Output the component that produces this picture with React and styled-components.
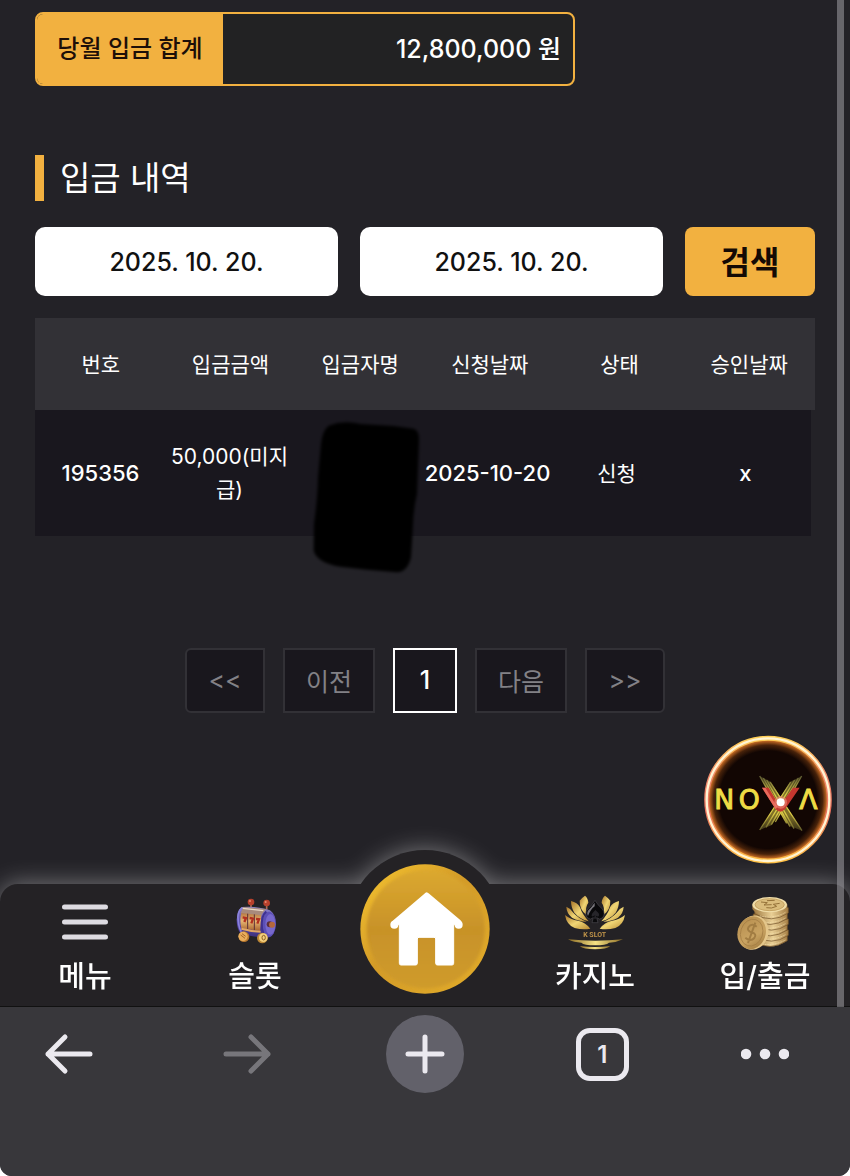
import React, { useState } from "react";
import styled, { createGlobalStyle } from "styled-components";

const gold = "#f2b140";
const pageBg = "#232227";
const barBg = "#242225";

const GlobalStyle = createGlobalStyle`
  * {
    box-sizing: border-box;
  }

  body {
    margin: 0;
    background-color: #fff;
    font-family: Inter, "Noto Sans CJK KR", sans-serif;
    font-weight: 500;
    color: #fff;
  }

  button,
  input {
    font-family: inherit;
    font-weight: inherit;
  }

  a {
    color: inherit;
    text-decoration: none;
  }
`;

const Screen = styled.div`
  position: relative;
  min-height: 100vh;
  display: flex;
  flex-direction: column;
  background-color: ${pageBg};
  border-radius: 0 0 12px 12px;
  overflow: hidden;
`;

const Viewport = styled.div`
  position: relative;
  flex: 1;
  display: flex;
  flex-direction: column;
`;

const ScrollBar = styled.div`
  position: absolute;
  top: 0;
  bottom: 0;
  right: 6px;
  width: 7px;
  background-color: rgba(160, 158, 164, 0.55);
`;

const Content = styled.main`
  flex: 1;
  padding: 12px 35px 0;
`;

const Summary = styled.div`
  display: flex;
  width: 540px;
  max-width: 100%;
  height: 74px;
  border: 2px solid ${gold};
  border-radius: 8px;
  background-color: #222223;
  line-height: 70px;
  overflow: hidden;
`;

const SummaryLabel = styled.div`
  width: 186px;
  background-color: ${gold};
  color: #1d0f08;
  font-size: 24px;
  text-align: center;
`;

const SummaryValue = styled.div`
  flex: 1;
  padding: 0 12px;
  font-size: 25px;
  text-align: right;
`;

const Title = styled.h2`
  margin: 69px 0 26px;
  padding-left: 16px;
  border-left: 9px solid ${gold};
  font-size: 33px;
  line-height: 46px;
  font-weight: 400;
`;

const SearchForm = styled.form`
  display: flex;
  gap: 22px;
`;

const DateInput = styled.input`
  flex: 1;
  min-width: 0;
  height: 69px;
  border: 0;
  border-radius: 10px;
  background-color: #fff;
  color: #111;
  font-size: 25px;
  text-align: center;
`;

const SearchButton = styled.button`
  width: 130px;
  height: 69px;
  padding: 0 0 4px;
  border: 0;
  border-radius: 8px;
  background-color: ${gold};
  color: #140a04;
  font-size: 32px;
  font-weight: 700;
  cursor: pointer;
`;

const Table = styled.table`
  display: block;
  margin-top: 22px;
  font-size: 21px;
  line-height: 33px;
  font-weight: 400;
  text-align: center;
`;

const Head = styled.thead`
  display: block;
`;

const Body = styled.tbody`
  display: block;
  padding-right: 4px;
`;

const Row = styled.tr`
  display: table;
  table-layout: fixed;
  width: 100%;
  height: ${(props) => (props.$head ? "92px" : "126px")};
  background-color: ${(props) => (props.$head ? "#323136" : "#19171e")};
`;

const HeadCell = styled.th`
  padding: 0;
  font-weight: 400;
`;

const Cell = styled.td`
  position: relative;
  padding: 0;
  font-size: ${(props) => (props.$number ? "22px" : "21px")};
  font-weight: ${(props) => (props.$number ? 500 : 400)};
  white-space: ${(props) => (props.$number ? "nowrap" : "normal")};
  word-break: break-all;
`;

const Redaction = styled.svg`
  position: absolute;
  top: 2px;
  left: 11px;
  width: 120px;
  height: 165px;
`;

const Pagination = styled.nav`
  display: flex;
  justify-content: center;
  gap: 18px;
  margin-top: 112px;
`;

const PageButton = styled.button`
  width: ${(props) => props.$width};
  height: 65px;
  padding: 0 0 2px;
  border: 2px solid ${(props) => (props.$active ? "#fff" : "#323136")};
  border-radius: ${(props) => props.$radius || "0"};
  background-color: #19171d;
  color: ${(props) => (props.$active ? "#fff" : "#828186")};
  font-size: 25px;
  font-weight: ${(props) => (props.$active ? 500 : 400)};
  cursor: pointer;
`;

const Dock = styled.div`
  position: relative;
  filter: drop-shadow(0 0 12px rgba(255, 255, 255, 0.4));
`;

const DockBump = styled.div`
  position: absolute;
  top: -34px;
  left: 50%;
  width: 156px;
  height: 156px;
  border-radius: 50%;
  background-color: ${barBg};
  transform: translateX(-50%);
`;

const DockList = styled.nav`
  position: relative;
  display: grid;
  grid-template-columns: repeat(5, 1fr);
  height: 123px;
  border-bottom: 1px solid #111;
  border-radius: 18px 18px 0 0;
  background-color: ${barBg};
`;

const DockItem = styled.a`
  display: flex;
  flex-direction: column;
  align-items: center;
  padding-top: 9px;
  font-size: 29px;
  line-height: 48px;

  svg {
    display: block;
    width: 60px;
    height: 60px;
  }
`;

const HomeLink = styled.a`
  position: relative;
  top: -20px;
  justify-self: center;
  width: 130px;
  height: 130px;

  svg {
    display: block;
    width: 100%;
    height: 100%;
  }
`;

const NovaBadge = styled.a`
  position: absolute;
  right: 17px;
  bottom: 142px;
  width: 130px;
  height: 130px;

  svg {
    display: block;
    width: 100%;
    height: 100%;
  }
`;

const BrowserBar = styled.div`
  position: relative;
  display: flex;
  justify-content: space-between;
  height: 169px;
  padding: 8px 61px 0 30px;
  background-color: #38373b;
`;

const BrowserButton = styled.button`
  display: flex;
  align-items: center;
  justify-content: center;
  width: ${(props) => props.$width || "78px"};
  height: 78px;
  padding: 0;
  border: 0;
  border-radius: 50%;
  background-color: ${(props) => (props.$filled ? "#62616a" : "transparent")};
  color: ${(props) => (props.$dim ? "#77767b" : "#ebe9ef")};
  cursor: pointer;
`;

const TabCount = styled.span`
  display: flex;
  align-items: center;
  justify-content: center;
  width: 53px;
  height: 53px;
  border: 5px solid currentColor;
  border-radius: 14px;
  font-size: 24px;
  font-weight: 600;
`;

const MenuIcon = () => (
  <svg viewBox="0 0 60 60" stroke="#dddbe1" strokeWidth="5" strokeLinecap="round">
    <path d="M9.500 14H50.500M9.500 29H50.500M9.500 44H50.500" />
  </svg>
);

const SlotIcon = () => (
  <svg viewBox="15 24 180 180">
    <defs>
      <linearGradient id="barrel" x1="0" y1="0" x2="0" y2="1">
        <stop offset="0" stopColor="#8f86c8" />
        <stop offset="0.500" stopColor="#5a4cae" />
        <stop offset="1" stopColor="#3c2f7a" />
      </linearGradient>
      <linearGradient id="reel" x1="0" y1="0" x2="0" y2="1">
        <stop offset="0" stopColor="#b87a42" />
        <stop offset="0.450" stopColor="#e6b673" />
        <stop offset="1" stopColor="#a8622d" />
      </linearGradient>
    </defs>
    <path d="M93 54V72M140 56V74" stroke="#b06a55" strokeWidth="5" />
    <circle cx="93" cy="51" r="10" fill="#b8402c" />
    <circle cx="140" cy="54" r="10" fill="#b8402c" />
    <circle cx="90" cy="48" r="3" fill="#e58a70" />
    <circle cx="137" cy="51" r="3" fill="#e58a70" />
    <path
      d="M66 66Q110 62 150 76Q168 90 168 116Q166 150 146 158Q100 156 62 146Q50 130 50 104Q52 76 66 66Z"
      fill="url(#barrel)"
    />
    <path d="M70 66L138 72Q126 84 122 96L62 84Z" fill="#a88a7c" />
    <path d="M68 70L130 77" stroke="#e9d9c8" strokeWidth="4" />
    <path d="M64 84L124 91L120 138L64 130Q58 106 64 84Z" fill="url(#reel)" />
    <path d="M83 86V132M103 88V136" stroke="#5b3038" strokeWidth="3" />
    <path
      d="M68 97L78 99L73 111M89 99L99 101L94 115M108 102L117 103L112 116"
      fill="none"
      stroke="#b2301f"
      strokeWidth="7"
    />
    <path d="M64 131Q92 139 122 140" fill="none" stroke="#e2a765" strokeWidth="6" />
    <path d="M66 68Q50 82 55 108Q57 130 64 140" fill="none" stroke="#8b83dc" strokeWidth="5" />
    <ellipse cx="147" cy="118" rx="20" ry="38" fill="#5c4fb6" />
    <ellipse cx="151" cy="118" rx="15" ry="31" fill="#7768cc" />
    <path d="M139 80Q122 92 126 130Q128 146 136 156" fill="none" stroke="#3e318f" strokeWidth="6" />
    <circle cx="149" cy="118" r="9" fill="#5b2e3c" />
    <circle cx="156" cy="119" r="9" fill="#b5683c" />
    <circle cx="72" cy="155" r="16" fill="#b9782e" />
    <circle cx="69" cy="154" r="14" fill="#e9ae5c" />
    <path d="M62 150L75 160M66 146L77 154" stroke="#a86728" strokeWidth="3" />
    <circle cx="127" cy="159" r="16" fill="#bc8736" />
    <circle cx="130" cy="158" r="13" fill="#f3cf7d" />
    <ellipse cx="131" cy="158" rx="5" ry="7" fill="none" stroke="#8d6123" strokeWidth="3" />
  </svg>
);

const CasinoIcon = () => (
  <svg viewBox="75 69 180 180">
    <defs>
      <linearGradient id="petal" x1="0" y1="0" x2="1" y2="1">
        <stop offset="0" stopColor="#a8752a" />
        <stop offset="0.500" stopColor="#f0d675" />
        <stop offset="1" stopColor="#b98a32" />
      </linearGradient>
      <linearGradient id="stand" x1="0" y1="0" x2="1" y2="0">
        <stop offset="0" stopColor="#8a6a24" />
        <stop offset="0.500" stopColor="#f4e184" />
        <stop offset="1" stopColor="#8a6a24" />
      </linearGradient>
    </defs>
    <g fill="url(#petal)">
      <path d="M135 77Q144 84 145 98Q134 112 140 136Q118 118 119 92Q126 83 135 77Z" />
      <path d="M93 93Q112 97 120 112Q126 132 146 154Q118 146 103 128Q93 112 93 93Z" />
      <path d="M79 110Q92 115 100 128Q114 144 140 155Q116 154 96 143Q80 130 79 110Z" />
      <path d="M75 135Q92 149 114 152Q136 156 151 176Q128 180 104 174Q80 165 75 135Z" />
      <path d="M195 77Q186 84 185 98Q196 112 190 136Q212 118 211 92Q204 83 195 77Z" />
      <path d="M237 93Q218 97 210 112Q204 132 184 154Q212 146 227 128Q237 112 237 93Z" />
      <path d="M251 110Q238 115 230 128Q216 144 190 155Q214 154 234 143Q250 130 251 110Z" />
      <path d="M255 135Q238 149 216 152Q194 156 179 176Q202 180 226 174Q250 165 255 135Z" />
    </g>
    <path
      d="M165 91Q174 106 187 117Q198 132 187 144Q179 151 170 143L174 158H156L160 143Q151 151 143 144Q132 132 143 117Q156 106 165 91Z"
      fill="#09090b"
      stroke="#4a494e"
      strokeWidth="2"
    />
    <path d="M164 98Q155 111 145 121Q139 130 144 138Q151 119 164 109Z" fill="#77757b" />
    <path d="M166 120Q182 132 176 139Q170 141 167 136L170 146H161L165 136Q158 141 155 138Q153 132 166 120Z" fill="#26252a" />
    <text
      x="164"
      y="202"
      textAnchor="middle"
      fill="#bd9249"
      fontFamily="Roboto, sans-serif"
      fontSize="21"
      fontWeight="700"
    >
      K SLOT
    </text>
    <path d="M84 208Q165 216 249 208Q229 218 207 218Q198 226 165 226Q132 226 124 218Q102 218 84 208Z" fill="url(#stand)" />
    <path d="M119 228Q165 234 211 228Q200 238 165 238Q130 238 119 228Z" fill="url(#stand)" />
  </svg>
);

const CoinsIcon = () => (
  <svg viewBox="585 69 180 180">
    <defs>
      <linearGradient id="edge" x1="0" y1="0" x2="1" y2="0">
        <stop offset="0" stopColor="#9a743c" />
        <stop offset="0.550" stopColor="#e9cf95" />
        <stop offset="1" stopColor="#a67f45" />
      </linearGradient>
      <linearGradient id="face" x1="0" y1="0" x2="1" y2="1">
        <stop offset="0" stopColor="#b48b4b" />
        <stop offset="0.600" stopColor="#c9a362" />
        <stop offset="1" stopColor="#9a7438" />
      </linearGradient>
    </defs>
    {[206, 190, 174, 157, 140, 123].map((y, i) => (
      <g key={y}>
        <path
          d={`M${640 + (i % 2) * 4} ${y - 8}V${y + 8}Q${690 + (i % 2) * 4} ${y + 40} ${742 + (i % 2) * 3} ${y + 6}V${y - 10}Z`}
          fill="url(#edge)"
          stroke="#6e4f27"
          strokeWidth="2"
        />
        <path
          d={`M660 ${y + 15}Q700 ${y + 24} 738 ${y + 3}`}
          fill="none"
          stroke="#f7e6b7"
          strokeWidth="2"
          strokeDasharray="3 2"
        />
      </g>
    ))}
    <path d="M637 103V117Q650 138 690 139Q730 137 742 117V103Z" fill="url(#edge)" />
    <ellipse cx="689" cy="104" rx="52" ry="23" fill="#f0dda8" />
    <ellipse cx="689" cy="104" rx="44" ry="18" fill="#dabc7c" stroke="#b8924f" strokeWidth="2" />
    <path
      d="M663 96L682 98L672 105L695 104M681 92L704 91M679 113Q694 117 710 109L700 103L719 100"
      fill="none"
      stroke="#957239"
      strokeWidth="3"
    />
    <ellipse cx="640" cy="188" rx="45" ry="52" fill="#e4c68a" transform="rotate(18 640 188)" />
    <ellipse cx="635" cy="188" rx="42" ry="50" fill="url(#face)" transform="rotate(18 635 188)" />
    <ellipse
      cx="635"
      cy="188"
      rx="33"
      ry="41"
      fill="none"
      stroke="#a07a41"
      strokeWidth="2"
      transform="rotate(18 635 188)"
    />
    <path
      d="M650 170Q636 158 625 172Q620 182 635 187Q652 192 643 204Q632 217 616 203M646 158L624 219"
      fill="none"
      stroke="#a27d43"
      strokeWidth="6"
    />
  </svg>
);

const HomeIcon = () => (
  <svg viewBox="60 72 390 390">
    <defs>
      <linearGradient id="homeRim" x1="0" y1="0" x2="1" y2="1">
        <stop offset="0" stopColor="#f6c531" />
        <stop offset="0.450" stopColor="#d39b28" />
        <stop offset="1" stopColor="#e3ad2a" />
      </linearGradient>
      <linearGradient id="homeFace" x1="0" y1="0" x2="0" y2="1">
        <stop offset="0" stopColor="#dba82f" />
        <stop offset="0.500" stopColor="#c89228" />
        <stop offset="1" stopColor="#cf9b2a" />
      </linearGradient>
      <filter id="soft">
        <feGaussianBlur stdDeviation="5" />
      </filter>
    </defs>
    <circle cx="255" cy="267" r="194" fill="url(#homeRim)" />
    <circle cx="257" cy="268" r="177" fill="url(#homeFace)" filter="url(#soft)" />
    <path
      d="M260 167L355 247M260 167L164 249"
      stroke="#fff"
      strokeWidth="18"
      strokeLinecap="round"
    />
    <path
      d="M260 164L355 250L341 255V370Q341 375 336 375H292Q287 375 287 370V297Q287 292 282 292H237Q232 292 232 297V370Q232 375 227 375H183Q178 375 178 370V255L165 250Z"
      fill="#fff"
      stroke="#fff"
      strokeWidth="3"
      strokeLinejoin="round"
    />
    <circle cx="163" cy="254" r="12" fill="#fff" />
    <circle cx="356" cy="254" r="12" fill="#fff" />
  </svg>
);

const NovaLogo = () => (
  <svg viewBox="39 45 390 390">
    <defs>
      <radialGradient id="novaGlow">
        <stop offset="0.780" stopColor="#120603" />
        <stop offset="0.870" stopColor="#47220a" />
        <stop offset="0.930" stopColor="#b4601f" />
        <stop offset="1" stopColor="#e8973f" />
      </radialGradient>
      <linearGradient id="novaRim" x1="0" y1="0" x2="0" y2="1">
        <stop offset="0" stopColor="#ffcf57" />
        <stop offset="0.300" stopColor="#f08a6c" />
        <stop offset="0.600" stopColor="#e8705c" />
        <stop offset="1" stopColor="#ffc044" />
      </linearGradient>
      <linearGradient id="ray" x1="0" y1="168" x2="0" y2="332" gradientUnits="userSpaceOnUse">
        <stop offset="0" stopColor="#5c5a32" />
        <stop offset="0.350" stopColor="#d9cc48" />
        <stop offset="0.700" stopColor="#d9c845" />
        <stop offset="1" stopColor="#5c5628" />
      </linearGradient>
      <filter id="rimBlur">
        <feGaussianBlur stdDeviation="2" />
      </filter>
    </defs>
    <circle cx="234" cy="239" r="188" fill="url(#novaGlow)" />
    <circle cx="234" cy="239" r="184" fill="none" stroke="url(#novaRim)" strokeWidth="15" filter="url(#rimBlur)" />
    <circle cx="234" cy="239" r="184" fill="none" stroke="#fff4d2" strokeWidth="7" filter="url(#rimBlur)" />
    <g fill="url(#ray)" opacity="0.550">
      <path d="M209 168L243 186L272 232L336 332L300 318L262 262Z" />
      <path d="M335 168L300 186L272 232L209 330L244 316L284 262Z" />
    </g>
    <g stroke="url(#ray)" strokeWidth="4" fill="none">
      <path d="M209 168L290 310M220 174L300 320M230 180L312 326M240 186L336 332" />
      <path d="M335 168L256 306M325 174L244 314M314 180L228 322M302 186L209 330" />
    </g>
    <g
      fontFamily="'DejaVu Sans', sans-serif"
      fontSize="80"
      fontWeight="400"
      fill="#efdc45"
      stroke="#efdc45"
      strokeWidth="3"
    >
      <text x="73" y="267">
        N
      </text>
      <text x="146" y="267">
        O
      </text>
      <text x="328" y="267">
        Λ
      </text>
    </g>
    <path d="M216 203H236L269 258L309 203H329L285 268Q271 282 257 268Z" fill="#c5372f" />
    <path d="M216 203H226L262 262L257 268Z" fill="#ea6a5c" />
    <circle cx="272" cy="247" r="19" fill="#f08b78" opacity="0.600" filter="url(#rimBlur)" />
    <circle cx="272" cy="247" r="12" fill="#fff" filter="url(#rimBlur)" />
  </svg>
);

const ArrowIcon = ({ flip }) => (
  <svg
    width="50"
    height="42"
    viewBox="0 0 50 42"
    fill="none"
    stroke="currentColor"
    strokeWidth="5"
    strokeLinecap="round"
    strokeLinejoin="round"
  >
    <path d={flip ? "M4 21H46M29 4L46 21L29 38" : "M46 21H4M21 4L4 21L21 38"} />
  </svg>
);

const columns = ["번호", "입금금액", "입금자명", "신청날짜", "상태", "승인날짜"];

const pages = [
  { label: "<<", width: "80px", radius: "6px 0 0 6px" },
  { label: "이전", width: "92px" },
  { label: "1", width: "64px", active: true },
  { label: "다음", width: "92px" },
  { label: ">>", width: "80px", radius: "0 6px 6px 0" },
];

const App = () => {
  const [from, setFrom] = useState("2025. 10. 20.");
  const [to, setTo] = useState("2025. 10. 20.");

  return (
    <Screen>
      <GlobalStyle />
      <Viewport>
        <Content>
          <Summary>
            <SummaryLabel>당월 입금 합계</SummaryLabel>
            <SummaryValue>12,800,000 원</SummaryValue>
          </Summary>

          <Title>입금 내역</Title>
          <SearchForm onSubmit={(e) => e.preventDefault()}>
            <DateInput
              aria-label="시작일"
              value={from}
              onChange={(e) => setFrom(e.target.value)}
            />
            <DateInput
              aria-label="종료일"
              value={to}
              onChange={(e) => setTo(e.target.value)}
            />
            <SearchButton type="submit">검색</SearchButton>
          </SearchForm>

          <Table>
            <Head>
              <Row $head>
                {columns.map((column) => (
                  <HeadCell key={column}>{column}</HeadCell>
                ))}
              </Row>
            </Head>
            <Body>
              <Row>
                <Cell $number>195356</Cell>
                <Cell>50,000(미지급)</Cell>
                <Cell>
                  <Redaction viewBox="917 310 360 495">
                    <filter id="brush">
                      <feGaussianBlur stdDeviation="5" />
                    </filter>
                    <path
                      d="M985 345Q1030 328 1080 340L1180 346L1240 354Q1258 360 1256 390L1250 550Q1238 600 1237 660L1232 740Q1222 784 1190 785L1100 777L1020 768Q950 756 940 720L941 640Q952 560 953 500L962 400Q966 360 985 345Z"
                      fill="#000"
                      filter="url(#brush)"
                    />
                  </Redaction>
                </Cell>
                <Cell $number>2025-10-20</Cell>
                <Cell>신청</Cell>
                <Cell $number>x</Cell>
              </Row>
            </Body>
          </Table>

          <Pagination>
            {pages.map((page) => (
              <PageButton
                key={page.label}
                $width={page.width}
                $radius={page.radius}
                $active={page.active}
              >
                {page.label}
              </PageButton>
            ))}
          </Pagination>
        </Content>

        <Dock>
          <DockBump />
          <DockList>
            <DockItem href="#menu">
              <MenuIcon />
              메뉴
            </DockItem>
            <DockItem href="#slot">
              <SlotIcon />
              슬롯
            </DockItem>
            <HomeLink href="#home" aria-label="홈">
              <HomeIcon />
            </HomeLink>
            <DockItem href="#casino">
              <CasinoIcon />
              카지노
            </DockItem>
            <DockItem href="#cash">
              <CoinsIcon />
              입/출금
            </DockItem>
          </DockList>
        </Dock>
        <NovaBadge href="#nova" aria-label="NOVA">
          <NovaLogo />
        </NovaBadge>
        <ScrollBar />
      </Viewport>

      <BrowserBar>
        <BrowserButton aria-label="뒤로">
          <ArrowIcon />
        </BrowserButton>
        <BrowserButton aria-label="앞으로" $dim>
          <ArrowIcon flip />
        </BrowserButton>
        <BrowserButton aria-label="새 탭" $filled>
          <svg width="40" height="40" viewBox="0 0 40 40" stroke="currentColor" strokeWidth="5" strokeLinecap="round">
            <path d="M20 3V37M3 20H37" />
          </svg>
        </BrowserButton>
        <BrowserButton>
          <TabCount>1</TabCount>
        </BrowserButton>
        <BrowserButton aria-label="더보기" $width="48px">
          <svg width="48" height="12" viewBox="0 0 48 12" fill="currentColor">
            <circle cx="5" cy="6" r="5.300" />
            <circle cx="24" cy="6" r="5.300" />
            <circle cx="43" cy="6" r="5.300" />
          </svg>
        </BrowserButton>
      </BrowserBar>
    </Screen>
  );
};

export default App;
